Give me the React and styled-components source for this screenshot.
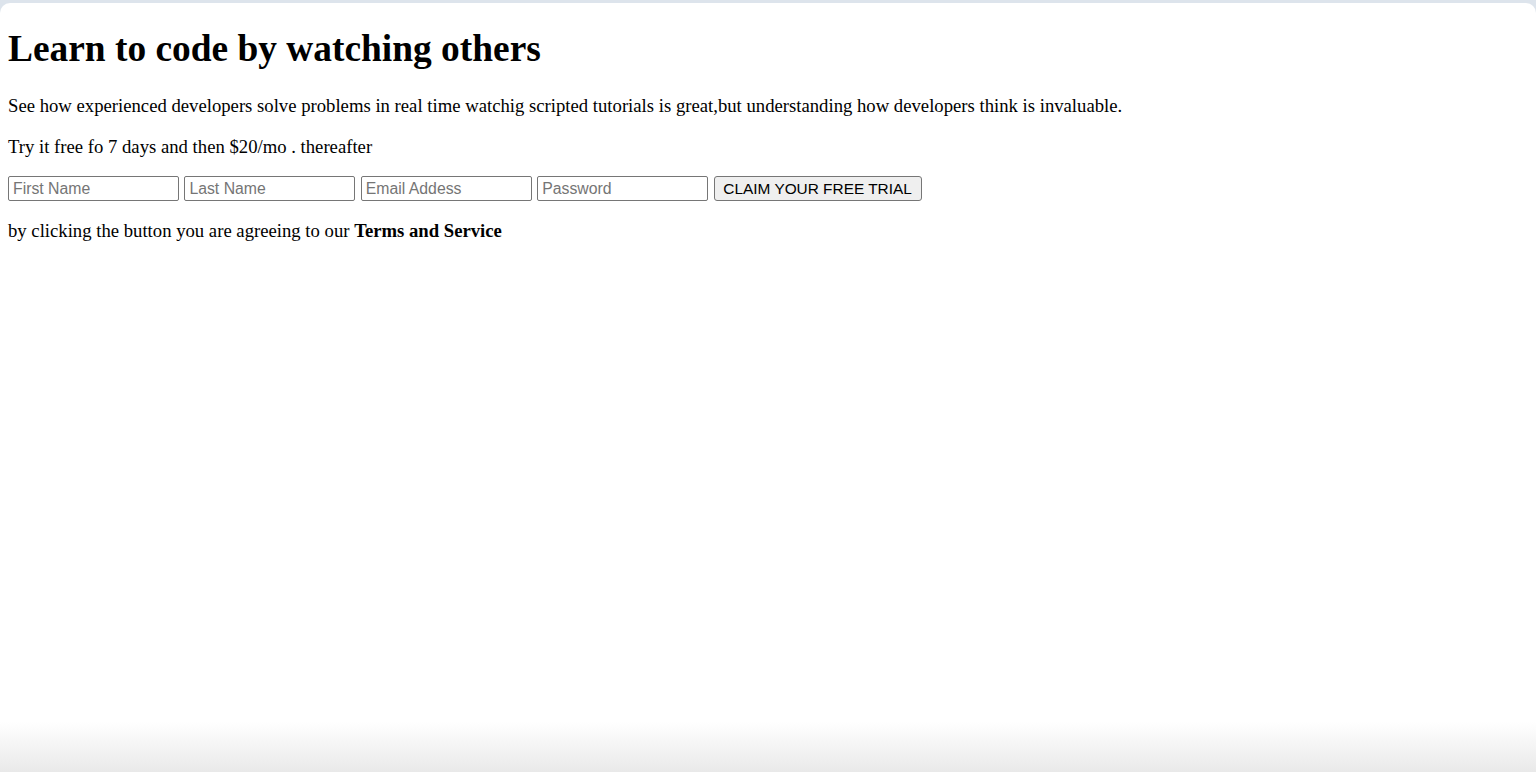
import React from 'react';
import styled, { createGlobalStyle } from 'styled-components';

const GlobalStyle = createGlobalStyle`
  html, body {
    margin: 0;
    padding: 0;
    height: 100%;
    background: #dde4ec;
  }
  #root {
    height: 100%;
  }
`;

const Window = styled.div`
  box-sizing: border-box;
  height: calc(100vh - 3px);
  margin-top: 3px;
  border-radius: 10px 10px 0 0;
  background: linear-gradient(to bottom, #ffffff calc(100% - 50px), #e9e9e9 100%);
  padding: 1px 8px 0;
  font-family: "Liberation Serif", "Times New Roman", serif;
  font-size: 18.7px;
  color: #000;
`;

const Title = styled.h1`
  font-size: 2em;
  font-weight: bold;
  margin: 23px 0 0.67em;
`;

const Text = styled.p`
  margin: 1em 0;
`;

const Form = styled.form`
  display: flex;
  align-items: center;
  gap: 5.4px;
  margin: 0;
`;

const Field = styled.input`
  box-sizing: border-box;
  width: 171px;
  height: 25px;
  padding: 1px 4px;
  border: 1px solid #767676;
  border-radius: 2px;
  font-family: "Liberation Sans", Arial, sans-serif;
  font-size: 15.8px;
  color: #000;
  background: #fff;
  &::placeholder {
    color: #757575;
  }
`;

const Claim = styled.button`
  box-sizing: border-box;
  width: 208px;
  height: 25px;
  padding: 1px 6px;
  border: 1px solid #767676;
  border-radius: 3px;
  background: #efefef;
  font-family: "Liberation Sans", Arial, sans-serif;
  font-size: 15.4px;
  color: #000;
`;

export default function App() {
  return (
    <>
      <GlobalStyle />
      <Window>
        <Title>Learn to code by watching others</Title>
        <Text>
          See how experienced developers solve problems in real time watchig scripted tutorials is great,but understanding how developers think is invaluable.
        </Text>
        <Text>Try it free fo 7 days and then $20/mo . thereafter</Text>
        <Form onSubmit={(e) => e.preventDefault()}>
          <Field type="text" placeholder="First Name" />
          <Field type="text" placeholder="Last Name" />
          <Field type="email" placeholder="Email Addess" />
          <Field type="password" placeholder="Password" />
          <Claim type="submit">CLAIM YOUR FREE TRIAL</Claim>
        </Form>
        <Text>
          by clicking the button you are agreeing to our <b>Terms and Service</b>
        </Text>
      </Window>
    </>
  );
}
